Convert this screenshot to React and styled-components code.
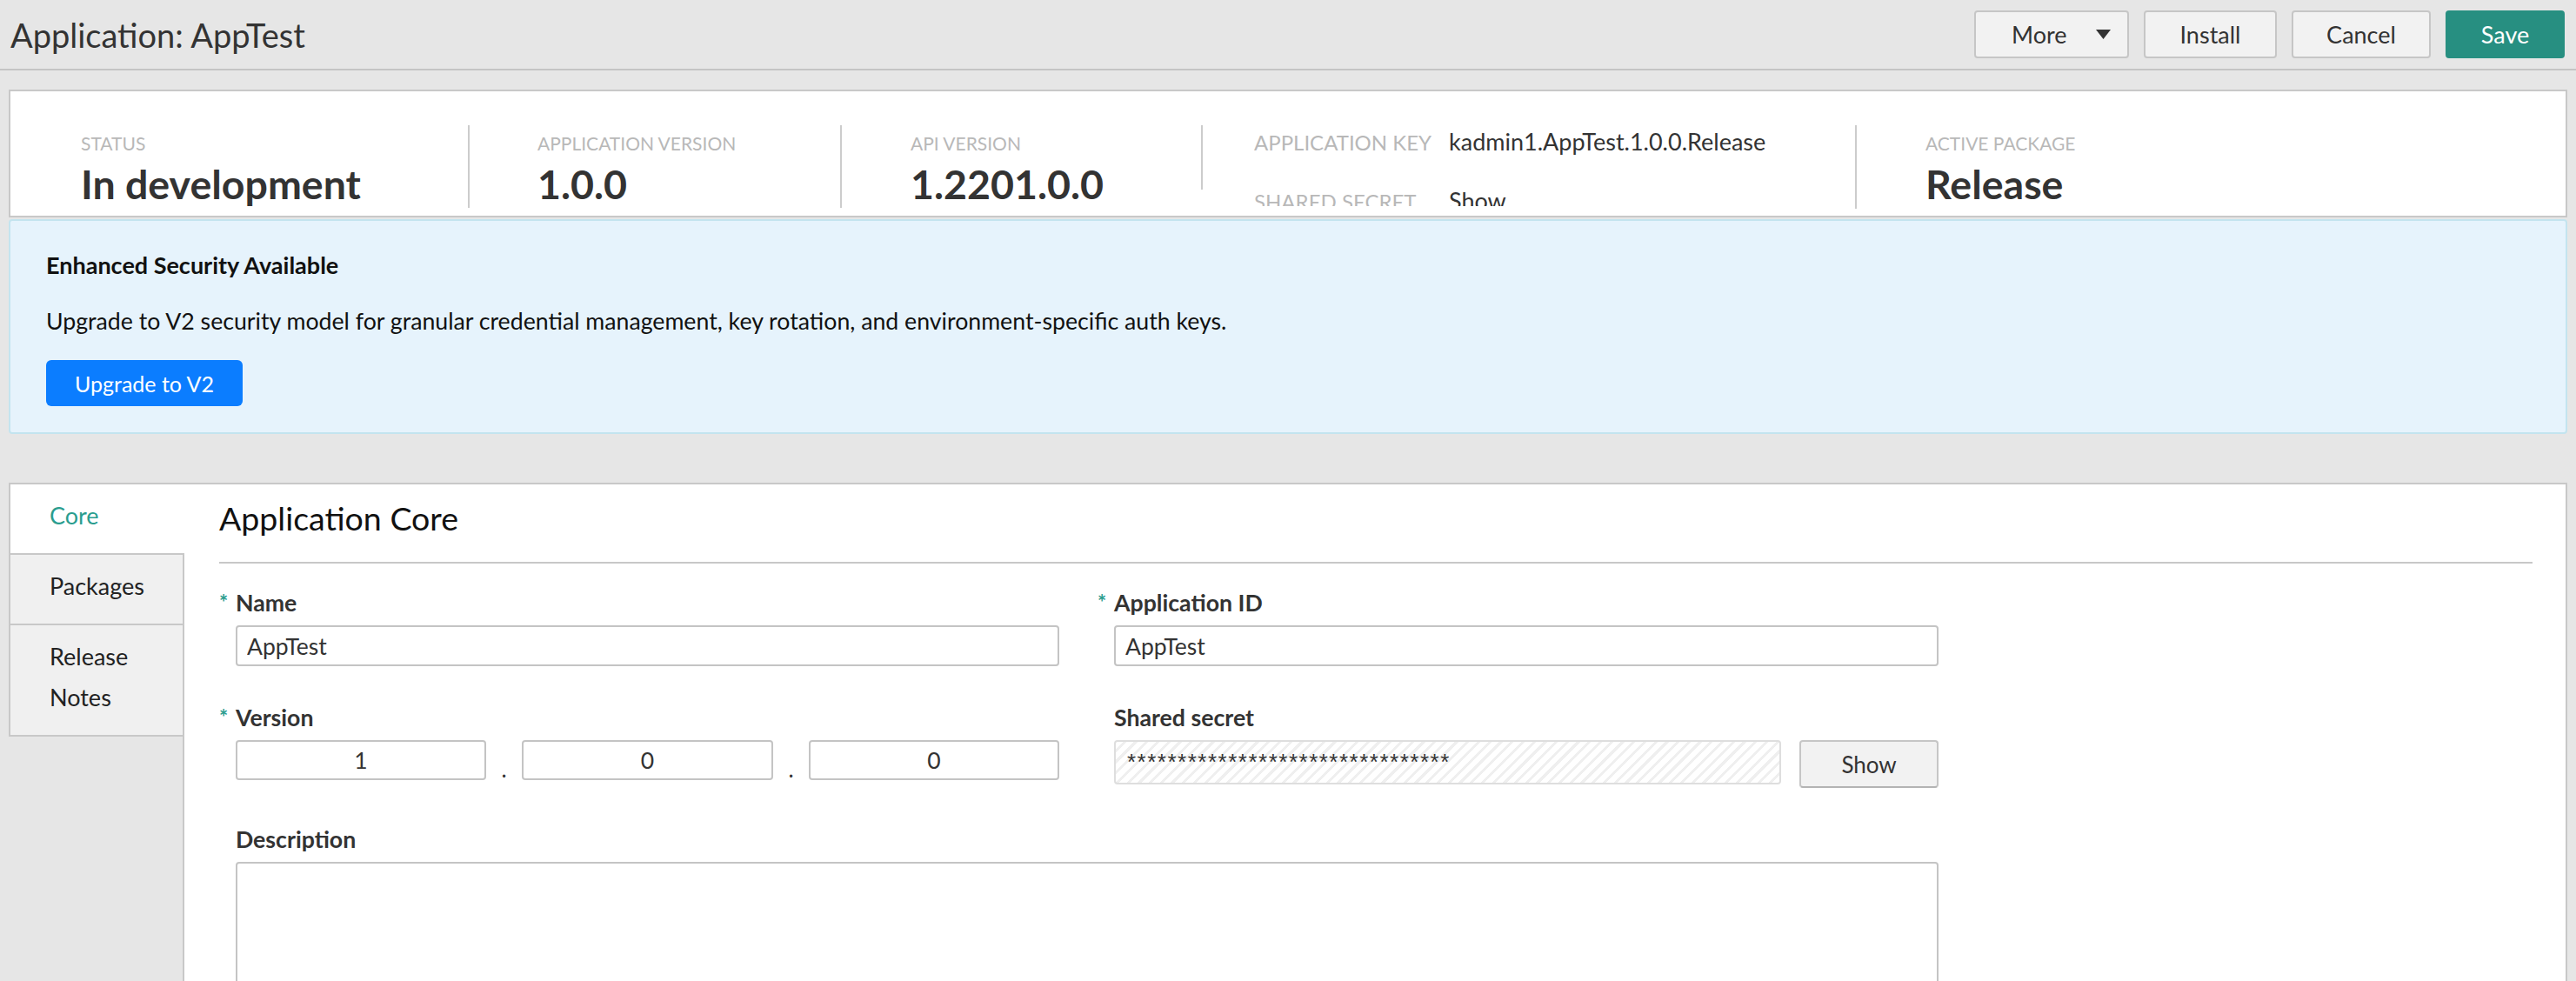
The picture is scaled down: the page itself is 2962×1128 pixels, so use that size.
import React from 'react';
import styled, { createGlobalStyle } from 'styled-components';

const GlobalStyle = createGlobalStyle`
  html, body { margin: 0; padding: 0; }
  body {
    background: #e6e6e6;
    font-family: Lato, "Open Sans", "Liberation Sans", sans-serif;
    color: #333;
    overflow: hidden;
  }
  * { box-sizing: border-box; }
`;

const Header = styled.header`
  height: 81px;
  display: flex;
  align-items: center;
  justify-content: space-between;
  padding: 0 13px 0 12px;
  border-bottom: 2px solid #c4c4c4;
`;

const Title = styled.h1`
  margin: 0;
  font-size: 38px;
  font-weight: 400;
  color: #333;
`;

const HeaderActions = styled.div`
  display: flex;
  gap: 17px;
`;

const ToolButton = styled.button`
  height: 55px;
  width: ${(p) => p.$w}px;
  display: flex;
  align-items: center;
  justify-content: ${(p) => (p.$split ? 'space-between' : 'center')};
  padding: ${(p) => (p.$split ? '0 19px 0 41px' : '0')};
  border: 2px solid ${(p) => (p.$primary ? '#278f81' : '#c6c6c6')};
  border-radius: 4px;
  background: ${(p) => (p.$primary ? '#278f81' : '#f2f2f2')};
  color: ${(p) => (p.$primary ? '#fff' : '#333')};
  font-family: inherit;
  font-size: 27px;
  font-weight: 400;
`;

const Caret = () => (
  <svg width="17" height="12" viewBox="0 0 17 12">
    <polygon points="0,0 17,0 8.5,11" fill="#333" />
  </svg>
);

const StatsCard = styled.section`
  margin: 22px 10px 0;
  height: 147px;
  padding-top: 39px;
  background: #fff;
  border: 2px solid #c8c8c8;
  display: flex;
  align-items: flex-start;
  overflow: hidden;
`;

const Stat = styled.div`
  flex: ${(p) => (p.$w ? '0 0 auto' : '1 1 auto')};
  width: ${(p) => (p.$w ? `${p.$w}px` : 'auto')};
  height: ${(p) => p.$h || 95}px;
  padding-left: ${(p) => p.$pl}px;
  border-right: ${(p) => (p.$last ? 'none' : '2px solid #cccccc')};
`;

const StatLabel = styled.div`
  margin-top: 9px;
  font-size: 21px;
  line-height: 24px;
  font-weight: 400;
  color: #b8b8b8;
  text-transform: uppercase;
  white-space: nowrap;
`;

const StatValue = styled.div`
  margin-top: 10px;
  font-size: 46.5px;
  line-height: 48px;
  font-weight: 700;
  color: #333;
  white-space: nowrap;
`;

const KeyTable = styled.div`
  display: grid;
  grid-template-columns: auto 1fr;
  align-items: baseline;
  column-gap: 20px;
  row-gap: 37px;
  height: 93px;
  padding-top: 4px;
  overflow: hidden;
  line-height: 30px;
  white-space: nowrap;
`;

const KeyLabel = styled.span`
  font-size: 24px;
  color: #b8b8b8;
  text-transform: uppercase;
`;

const KeyValue = styled.span`
  font-size: 27px;
  color: #333;
`;

const Banner = styled.section`
  margin: 2px 10px 0;
  padding: 36px 41px 30px;
  background: #e6f3fc;
  border: 2px solid #c3e4ef;
  border-radius: 4px;
`;

const BannerTitle = styled.div`
  font-size: 27px;
  line-height: 30px;
  font-weight: 700;
  color: #111;
`;

const BannerText = styled.p`
  margin: 34px 0 0;
  font-size: 26.7px;
  line-height: 30px;
  color: #111;
`;

const PrimaryButton = styled.button`
  margin-top: 30px;
  width: 226px;
  height: 53px;
  border: none;
  border-radius: 6px;
  background: #0b7dff;
  color: #fff;
  font-family: inherit;
  font-size: 25px;
`;

const Workspace = styled.div`
  display: flex;
  align-items: flex-start;
  margin: 56px 10px 0;
`;

const TabList = styled.nav`
  flex: none;
  width: 200px;
  display: flex;
  flex-direction: column;
`;

const Tab = styled.div`
  position: relative;
  z-index: 1;
  width: ${(p) => (p.$active ? '202px' : '200px')};
  padding: 12px 20px 20px 45px;
  border-left: 2px solid #c8c8c8;
  border-bottom: 2px solid #c8c8c8;
  border-top: ${(p) => (p.$first ? '2px solid #c8c8c8' : 'none')};
  background: ${(p) => (p.$active ? '#fff' : '#f0f0f0')};
  color: ${(p) => (p.$active ? '#2a9d8f' : '#222')};
  font-size: 27px;
  line-height: 47px;
`;

const Panel = styled.main`
  flex: 1 1 auto;
  min-width: 0;
  min-height: 700px;
  padding: 17px 38px 60px 40px;
  background: #fff;
  border: 2px solid #c8c8c8;
`;

const PanelTitle = styled.h2`
  margin: 0;
  font-size: 37.5px;
  line-height: 44px;
  font-weight: 400;
  color: #111;
`;

const Rule = styled.hr`
  margin: 28px 0 0;
  border: none;
  border-top: 2px solid #c8c8c8;
`;

const FormGrid = styled.div`
  display: grid;
  grid-template-columns: 966px 967px;
  column-gap: 44px;
  row-gap: 44px;
  margin-top: 30px;
  align-items: start;
`;

const Field = styled.div`
  grid-column: ${(p) => (p.$wide ? '1 / -1' : 'auto')};
  padding-left: 19px;
  display: flex;
  flex-direction: column;
  gap: 11px;
`;

const Label = styled.label`
  font-size: 26.7px;
  line-height: 30px;
  font-weight: 700;
  color: #333;
`;

const Required = styled.span`
  display: inline-block;
  width: 19px;
  margin-left: -19px;
  color: #2a9d8f;
  font-weight: 700;
  font-size: 24px;
  vertical-align: top;
`;

const TextInput = styled.input`
  height: ${(p) => p.$h || 47}px;
  width: ${(p) => (p.$w ? `${p.$w}px` : '100%')};
  padding: 0 11px;
  border: 2px solid #c4c4c4;
  border-radius: 4px;
  background: #fff;
  color: #333;
  font-family: inherit;
  font-size: 26.5px;
  text-align: ${(p) => (p.$center ? 'center' : 'left')};
  outline: none;
`;

const VersionRow = styled.div`
  display: flex;
  align-items: flex-end;
`;

const VersionDot = styled.span`
  width: 42px;
  text-align: center;
  font-size: 26px;
  line-height: 26px;
  color: #333;
`;

const SecretRow = styled.div`
  display: flex;
  align-items: flex-start;
  gap: 21px;
`;

const SecretBox = styled.div`
  width: 768px;
  height: 51px;
  padding: 8px 13px 0;
  border: 2px solid #dedede;
  border-radius: 4px;
  background: repeating-linear-gradient(
    -45deg,
    #ffffff 0px,
    #ffffff 6px,
    #efefef 6px,
    #efefef 9px
  );
  color: #333;
  font-family: "Liberation Sans", Arial, sans-serif;
  font-size: 26px;
  line-height: 30px;
  letter-spacing: 1.5px;
  white-space: nowrap;
  overflow: hidden;
`;

const ShowButton = styled.button`
  width: 160px;
  height: 55px;
  border: 2px solid #c6c6c6;
  border-bottom-color: #b4b4b4;
  border-radius: 4px;
  background: #f2f2f2;
  color: #333;
  font-family: inherit;
  font-size: 26px;
`;

const TextArea = styled.textarea`
  width: 100%;
  height: 260px;
  border: 2px solid #c4c4c4;
  border-radius: 4px;
  resize: none;
  font-family: inherit;
  font-size: 26px;
`;

export default function App() {
  return (
    <>
      <GlobalStyle />
      <Header>
        <Title>Application: AppTest</Title>
        <HeaderActions>
          <ToolButton $w={178} $split>
            More
            <Caret />
          </ToolButton>
          <ToolButton $w={153}>Install</ToolButton>
          <ToolButton $w={160}>Cancel</ToolButton>
          <ToolButton $w={137} $primary>
            Save
          </ToolButton>
        </HeaderActions>
      </Header>

      <StatsCard>
        <Stat $w={528} $pl={81}>
          <StatLabel>Status</StatLabel>
          <StatValue>In development</StatValue>
        </Stat>
        <Stat $w={428} $pl={78}>
          <StatLabel>Application version</StatLabel>
          <StatValue>1.0.0</StatValue>
        </Stat>
        <Stat $w={415} $pl={79} $h={74}>
          <StatLabel>API version</StatLabel>
          <StatValue>1.2201.0.0</StatValue>
        </Stat>
        <Stat $w={752} $pl={59} $h={96}>
          <KeyTable>
            <KeyLabel>Application key</KeyLabel>
            <KeyValue>kadmin1.AppTest.1.0.0.Release</KeyValue>
            <KeyLabel>Shared secret</KeyLabel>
            <KeyValue>Show</KeyValue>
          </KeyTable>
        </Stat>
        <Stat $pl={79} $last>
          <StatLabel>Active package</StatLabel>
          <StatValue>Release</StatValue>
        </Stat>
      </StatsCard>

      <Banner>
        <BannerTitle>Enhanced Security Available</BannerTitle>
        <BannerText>
          Upgrade to V2 security model for granular credential management, key rotation, and
          environment-specific auth keys.
        </BannerText>
        <PrimaryButton>Upgrade to V2</PrimaryButton>
      </Banner>

      <Workspace>
        <TabList>
          <Tab $active $first>Core</Tab>
          <Tab>Packages</Tab>
          <Tab>Release Notes</Tab>
        </TabList>
        <Panel>
          <PanelTitle>Application Core</PanelTitle>
          <Rule />
          <FormGrid>
            <Field>
              <Label>
                <Required>*</Required>Name
              </Label>
              <TextInput readOnly defaultValue="AppTest" />
            </Field>
            <Field>
              <Label>
                <Required>*</Required>Application ID
              </Label>
              <TextInput readOnly defaultValue="AppTest" />
            </Field>
            <Field>
              <Label>
                <Required>*</Required>Version
              </Label>
              <VersionRow>
                <TextInput readOnly $w={288} $h={46} $center defaultValue="1" />
                <VersionDot>.</VersionDot>
                <TextInput readOnly $w={289} $h={46} $center defaultValue="0" />
                <VersionDot>.</VersionDot>
                <TextInput readOnly $w={288} $h={46} $center defaultValue="0" />
              </VersionRow>
            </Field>
            <Field>
              <Label>Shared secret</Label>
              <SecretRow>
                <SecretBox>********************************</SecretBox>
                <ShowButton>Show</ShowButton>
              </SecretRow>
            </Field>
            <Field $wide>
              <Label>Description</Label>
              <TextArea readOnly />
            </Field>
          </FormGrid>
        </Panel>
      </Workspace>
    </>
  );
}
